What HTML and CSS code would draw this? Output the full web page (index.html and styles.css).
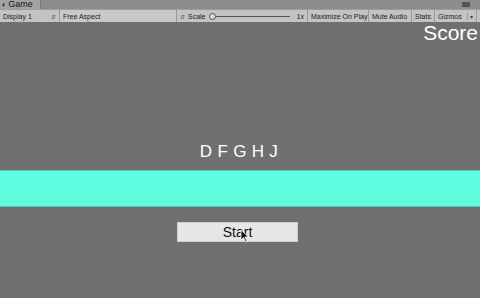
FILE: index.html
```html
<!DOCTYPE html>
<html lang="en">
<head>
  <meta charset="UTF-8" />
  <title>Game</title>
  <link rel="stylesheet" href="styles.css">
</head>
<body>
  <div class="tabs">
    <div class="tab"><span class="tab-icon">&#9680;</span>Game</div>
    <div class="tab-menu"></div>
  </div>
  <div class="toolbar">
    <div class="tool display">Display 1 <span class="arrows">&#8693;</span></div>
    <div class="tool aspect">Free Aspect</div>
    <div class="tool scale">
      <span class="arrows">&#8693;</span>
      <span>Scale</span>
      <div class="slider"><div class="knob"></div></div>
      <span>1x</span>
    </div>
    <div class="tool maximize">Maximize On Play</div>
    <div class="tool mute">Mute Audio</div>
    <div class="tool stats">Stats</div>
    <div class="tool gizmos">Gizmos <span class="drop">&#9662;</span></div>
  </div>
  <main class="game">
    <div class="score">Score</div>
    <div class="letters">D F G H J</div>
    <div class="bar"></div>
    <button class="start">Start</button>
    <svg class="cursor" width="10" height="14" viewBox="0 0 10 14">
      <path d="M1 1 L1 11 L3.5 8.5 L5.5 13 L7 12.3 L5 8 L8.5 8 Z" fill="#111" stroke="#fff" stroke-width="0.8"/>
    </svg>
  </main>
</body>
</html>
```

FILE: styles.css
```css
body {
  margin: 0;
  width: 480px;
  height: 298px;
  overflow: hidden;
  font-family: "Liberation Sans", Arial, sans-serif;
  background: #717071;
}
.tabs {
  height: 9px;
  background: #8d8d8d;
  display: flex;
  position: relative;
}
.tab {
  width: 38px;
  background: #a4a4a4;
  font-size: 9px;
  line-height: 9px;
  color: #111;
  padding-left: 2px;
  overflow: hidden;
  border-right: 1px solid #777;
}
.tab-icon {
  font-size: 7px;
  margin-right: 2px;
}
.tab-menu {
  position: absolute;
  right: 10px;
  top: 2px;
  width: 8px;
  height: 5px;
  background: #555;
}
.toolbar {
  height: 12px;
  background: #c3c3c3;
  border-top: 1px solid #9c9c9c;
  display: flex;
  font-size: 7px;
  color: #1a1a1a;
}
.tool {
  display: flex;
  align-items: center;
  gap: 3px;
  padding: 0 3px;
  border-right: 1px solid #9a9a9a;
  box-sizing: border-box;
  white-space: nowrap;
}
.display { width: 60px; justify-content: space-between; }
.aspect { width: 117px; background: #c9c9c9; }
.scale { width: 131px; }
.maximize { width: 61px; }
.mute { width: 43px; }
.stats { width: 23px; }
.gizmos { width: 42px; justify-content: space-between; }
.arrows { font-size: 6px; color: #555; }
.drop { font-size: 6px; color: #444; border-left: 1px solid #999; padding-left: 2px; }
.slider {
  flex: 1;
  height: 1px;
  background: #555;
  position: relative;
  margin: 0 4px 0 1px;
}
.knob {
  position: absolute;
  left: -1px;
  top: -3px;
  width: 5px;
  height: 5px;
  border: 1px solid #555;
  border-radius: 50%;
  background: #ddd;
}
.game {
  position: relative;
  height: 277px;
  display: flex;
  flex-direction: column;
  align-items: center;
}
.score {
  align-self: flex-end;
  color: #fff;
  font-size: 21px;
  margin-top: -1px;
  margin-right: 2px;
}
.letters {
  color: #fff;
  font-size: 17px;
  letter-spacing: 0.3px;
  margin-top: 97px;
  margin-left: -2px;
}
.bar {
  align-self: stretch;
  height: 35px;
  margin-top: 8px;
  background: #5ffde0;
  border-top: 1px solid #50c8b5;
  border-bottom: 1px solid #50c8b5;
}
.start {
  width: 121px;
  height: 20px;
  margin-top: 15px;
  margin-left: -5px;
  background: #e6e6e6;
  border: 1px solid #cfcfcf;
  font-family: "Liberation Sans", Arial, sans-serif;
  font-size: 14px;
  color: #111;
  padding: 0;
}
.cursor {
  position: absolute;
  left: 240px;
  top: 207px;
}
```
